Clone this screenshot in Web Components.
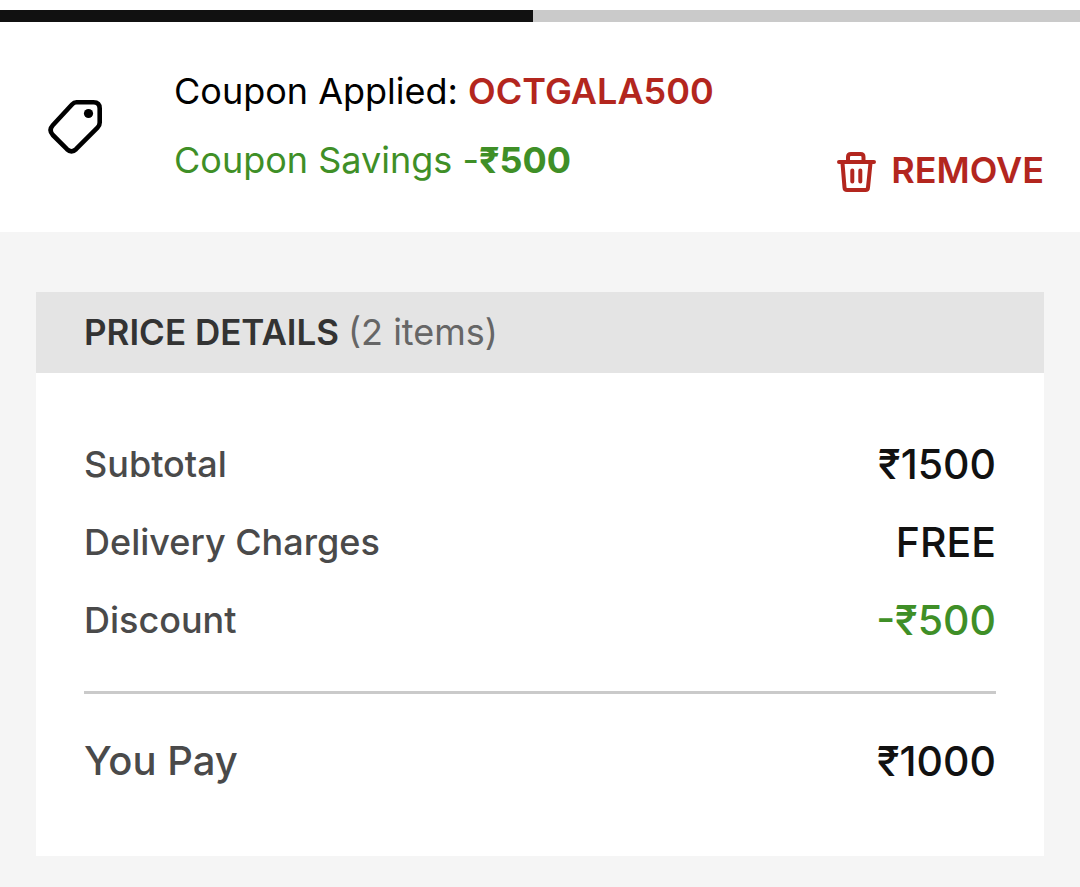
<!DOCTYPE html>
<html lang="en">
<head>
<meta charset="utf-8">
<meta name="viewport" content="width=device-width, initial-scale=1">
<title>Price details</title>
<style>
  body {
    margin: 0;
    background: #f5f5f5;
    color: #111;
    font-family: Inter, "Noto Sans", sans-serif;
    font-size: 36px;
    line-height: 40px;
  }
</style>
</head>
<body>
<step-bar></step-bar>
<coupon-banner>
  <span slot="code">OCTGALA500</span>
  <span slot="savings">₹500</span>
</coupon-banner>
<price-details>
  <span slot="count">(2 items)</span>
  <span slot="subtotal">₹1500</span>
  <span slot="delivery">FREE</span>
  <span slot="discount">-₹500</span>
  <span slot="total">₹1000</span>
</price-details>

<template id="step-bar">
  <style>
    :host { display: block; background: #fff; padding-top: 10px; }
    .track { height: 12px; background: #cacaca; }
    .fill { width: 49.35%; height: 100%; background: #111; }
  </style>
  <div class="track"><div class="fill"></div></div>
</template>

<template id="coupon-banner">
  <style>
    :host { display: block; background: #fff; color: #000; }
    section { display: flex; padding: 49px 36px 40px 48px; }
    .tag { flex: none; width: 56px; height: 56px; margin: 27px 70px 0 0; }
    .text { flex: 1; display: flex; flex-direction: column; gap: 29px; padding-bottom: 12px; }
    p { margin: 0; }
    .code { color: #b3261e; font-weight: 600; }
    .savings { color: #3f8f27; }
    .savings b { font-weight: 700; }
  </style>
  <section>
    <svg class="tag" viewBox="0 0 56 56" fill="none" stroke="#000" stroke-width="4.6" stroke-linejoin="round" aria-hidden="true">
      <path d="M28.5 4.3H45.500Q51.700 4.300 51.700 10.500V24.500Q51.700 27.500 49.500 29.700L28 51.200Q23.500 55.400 19 51.200L4.800 37Q.3 32 4.800 27.200L24 6.500Q26 4.300 28.500 4.300Z"/>
      <circle cx="40.500" cy="15.500" r="4.600" fill="#000" stroke="none"/>
    </svg>
    <div class="text">
      <p>Coupon Applied: <span class="code"><slot name="code"></slot></span></p>
      <p class="savings">Coupon Savings -<b><slot name="savings"></slot></b></p>
    </div>
    <remove-button>REMOVE</remove-button>
  </section>
</template>

<template id="remove-button">
  <style>
    :host { display: block; align-self: flex-end; }
    button {
      display: flex; align-items: center; gap: 15px;
      margin: 0; padding: 0; border: 0; background: none;
      color: #b3261e; font: inherit; font-weight: 600; cursor: pointer;
    }
    svg { width: 40px; height: 40px; }
    span { padding-bottom: 4px; line-height: 36px; }
  </style>
  <button type="button">
    <svg viewBox="0 0 40 40" fill="none" stroke="currentColor" stroke-width="4" stroke-linecap="round" stroke-linejoin="round" aria-hidden="true">
      <path d="M3 10H38M12 9V5Q12 2 15 2H24.500Q27.500 2 27.500 5V9M6.500 11L8.500 35.500Q8.700 38 11 38H29.500Q31.800 38 32 35.500L34.500 11M16.300 18.500V29.500M24.300 18.500V29.500"/>
    </svg>
    <span><slot></slot></span>
  </button>
</template>

<template id="price-details">
  <style>
    :host { display: block; margin: 60px 36px 31px; background: #fff; }
    h2 {
      margin: 0; padding: 20px 48px 21px; background: #e4e4e4;
      color: #333; font-size: 35px; font-weight: 600;
    }
    .count { color: #666; font-size: 36px; font-weight: 400; }
    .body { padding: 53px 48px 55px; }
    table { width: 100%; border-collapse: separate; border-spacing: 0; }
    th, td { padding: 18px 0 20px; font-weight: 500; }
    th { color: #4a4a4a; text-align: left; }
    tbody th { font-weight: 450; }
    td { font-size: 41px; text-align: right; }
    tbody tr:last-child > * { padding-bottom: 51px; }
    tfoot > tr > * { padding-top: 47px; border-top: 3px solid #cacaca; }
    tfoot th { font-size: 40px; font-weight: 450; }
    .discount { color: #3f8f27; }
  </style>
  <section>
    <h2>PRICE DETAILS <span class="count"><slot name="count"></slot></span></h2>
    <div class="body">
      <table>
        <tbody>
          <tr><th scope="row">Subtotal</th><td><slot name="subtotal"></slot></td></tr>
          <tr><th scope="row">Delivery Charges</th><td><slot name="delivery"></slot></td></tr>
          <tr><th scope="row">Discount</th><td class="discount"><slot name="discount"></slot></td></tr>
        </tbody>
        <tfoot>
          <tr><th scope="row">You Pay</th><td><slot name="total"></slot></td></tr>
        </tfoot>
      </table>
    </div>
  </section>
</template>

<script>
  class TemplateElement extends HTMLElement {
    constructor() {
      super();
      const template = document.getElementById(this.localName);
      this.attachShadow({ mode: "open" }).append(document.importNode(template.content, true));
    }
  }
  customElements.define("remove-button", class RemoveButton extends TemplateElement {});
  customElements.define("step-bar", class StepBar extends TemplateElement {});
  customElements.define("coupon-banner", class CouponBanner extends TemplateElement {});
  customElements.define("price-details", class PriceDetails extends TemplateElement {});
</script>
</body>
</html>
